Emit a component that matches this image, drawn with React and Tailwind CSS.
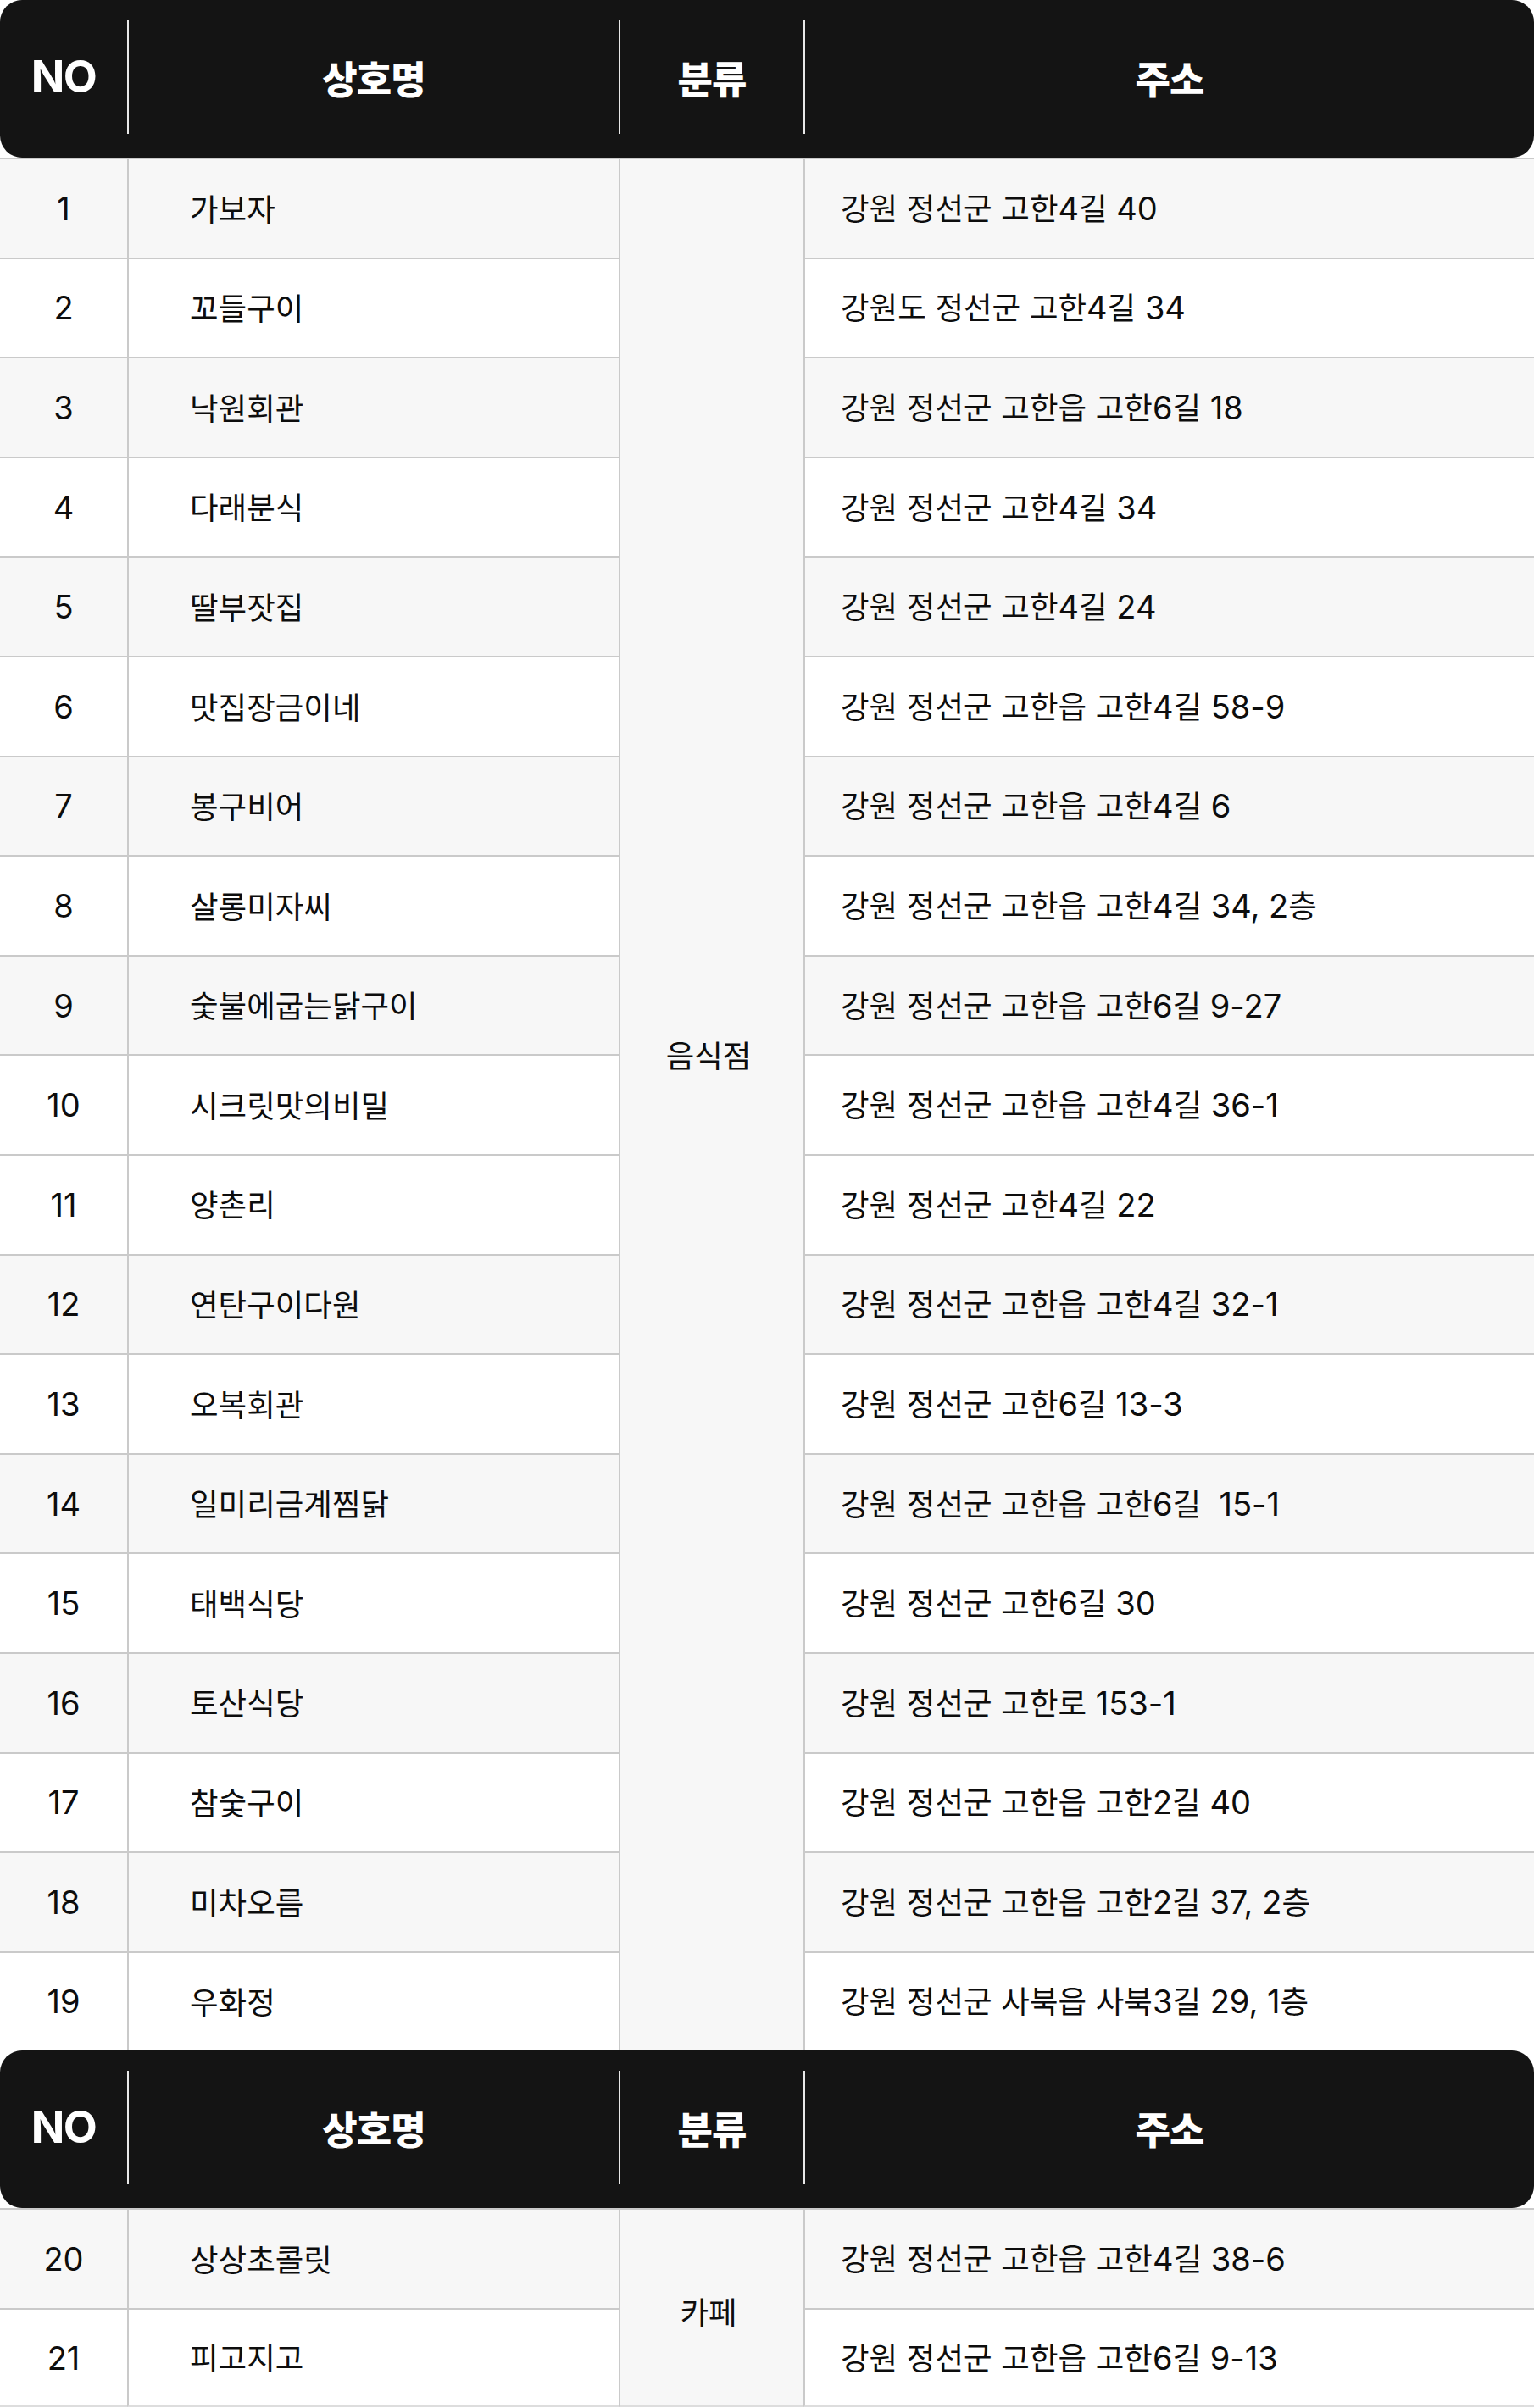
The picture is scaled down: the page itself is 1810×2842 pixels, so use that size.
import React from "react";

const rows1 = [
  [1, "가보자", "강원 정선군 고한4길 40"],
  [2, "꼬들구이", "강원도 정선군 고한4길 34"],
  [3, "낙원회관", "강원 정선군 고한읍 고한6길 18"],
  [4, "다래분식", "강원 정선군 고한4길 34"],
  [5, "딸부잣집", "강원 정선군 고한4길 24"],
  [6, "맛집장금이네", "강원 정선군 고한읍 고한4길 58-9"],
  [7, "봉구비어", "강원 정선군 고한읍 고한4길 6"],
  [8, "살롱미자씨", "강원 정선군 고한읍 고한4길 34, 2층"],
  [9, "숯불에굽는닭구이", "강원 정선군 고한읍 고한6길 9-27"],
  [10, "시크릿맛의비밀", "강원 정선군 고한읍 고한4길 36-1"],
  [11, "양촌리", "강원 정선군 고한4길 22"],
  [12, "연탄구이다원", "강원 정선군 고한읍 고한4길 32-1"],
  [13, "오복회관", "강원 정선군 고한6길 13-3"],
  [14, "일미리금계찜닭", "강원 정선군 고한읍 고한6길  15-1"],
  [15, "태백식당", "강원 정선군 고한6길 30"],
  [16, "토산식당", "강원 정선군 고한로 153-1"],
  [17, "참숯구이", "강원 정선군 고한읍 고한2길 40"],
  [18, "미차오름", "강원 정선군 고한읍 고한2길 37, 2층"],
  [19, "우화정", "강원 정선군 사북읍 사북3길 29, 1층"],
];

const rows2 = [
  [20, "상상초콜릿", "강원 정선군 고한읍 고한4길 38-6"],
  [21, "피고지고", "강원 정선군 고한읍 고한6길 9-13"],
];

const grayRows = new Set([1, 3, 5, 7, 9, 12, 14, 16, 18, 20]);

function Txt({ text }) {
  const parts = String(text).split(/([\u3131-\u318E\uAC00-\uD7A3]+)/);
  return (
    <span className="whitespace-pre leading-none text-[#0d0d0d]">
      {parts.map((p, i) =>
        p === "" ? null : /[\u3131-\u318E\uAC00-\uD7A3]/.test(p) ? (
          <span key={i} className="font-['Noto_Sans_CJK_KR',sans-serif] text-[36.5px]">
            {p}
          </span>
        ) : (
          <span key={i} className="font-[Inter,'Noto_Sans_CJK_KR',sans-serif] text-[38px]">
            {p}
          </span>
        )
      )}
    </span>
  );
}

function HeadTxt({ text }) {
  const isHangul = /[\uAC00-\uD7A3]/.test(text);
  return isHangul ? (
    <span className="font-['Noto_Sans_CJK_KR',sans-serif] font-black text-[45px] leading-none tracking-[-0.02em] text-white">
      {text}
    </span>
  ) : (
    <span className="font-[Inter,sans-serif] font-bold text-[52px] leading-none tracking-[-0.03em] text-white">
      {text}
    </span>
  );
}

function Header() {
  return (
    <div className="grid grid-cols-[150px_580px_218px_1fr] bg-[#141414] rounded-[26px] pt-[24px] pb-[28px] h-[186px]">
      <div className="flex items-center justify-center">
        <HeadTxt text="NO" />
      </div>
      <div className="flex items-center justify-center border-l-2 border-[#e8e8e8]">
        <HeadTxt text="상호명" />
      </div>
      <div className="flex items-center justify-center border-l-2 border-[#e8e8e8]">
        <HeadTxt text="분류" />
      </div>
      <div className="flex items-center justify-center border-l-2 border-[#e8e8e8]">
        <HeadTxt text="주소" />
      </div>
    </div>
  );
}

function Body({ rows, category, rowsClass, catClass, last }) {
  return (
    <div className={`grid grid-cols-[150px_580px_218px_1fr] ${rowsClass}`}>
      {rows.map(([no, name, addr], i) => {
        const bg = grayRows.has(no) ? "bg-[#f7f7f7]" : "bg-white";
        const isLast = last && i === rows.length - 1;
        const bb = isLast ? "border-b-2 border-b-[#dddddd]" : "";
        return (
          <React.Fragment key={no}>
            <div
              className={`${bg} ${bb} border-t-2 border-t-[#cacaca] flex items-center justify-center`}
              style={{ gridColumn: 1, gridRow: i + 1 }}
            >
              <Txt text={String(no)} />
            </div>
            <div
              className={`${bg} ${bb} border-t-2 border-t-[#cacaca] border-l-2 border-l-[#cacaca] flex items-center pl-[72px]`}
              style={{ gridColumn: 2, gridRow: i + 1 }}
            >
              <Txt text={name} />
            </div>
            <div
              className={`${bg} ${bb} border-t-2 border-t-[#cacaca] border-l-2 border-l-[#cacaca] flex items-center pl-[42px]`}
              style={{ gridColumn: 4, gridRow: i + 1 }}
            >
              <Txt text={addr} />
            </div>
          </React.Fragment>
        );
      })}
      <div
        className={`bg-[#f7f7f7] border-t-2 border-t-[#cacaca] border-l-2 border-l-[#cacaca] flex items-center justify-center pr-2 ${catClass} ${
          last ? "border-b-2 border-b-[#dddddd]" : ""
        }`}
        style={{ gridColumn: 3, gridRow: `1 / span ${rows.length}` }}
      >
        <Txt text={category} />
      </div>
    </div>
  );
}

export default function App() {
  return (
    <div className="w-[1810px] bg-white">
      <Header />
      <Body
        rows={rows1}
        category="음식점"
        rowsClass="grid-rows-[repeat(19,117.6px)]"
        catClass="pb-[117px]"
        last={false}
      />
      <Header />
      <Body
        rows={rows2}
        category="카페"
        rowsClass="grid-rows-[repeat(2,117.6px)]"
        catClass="pt-[8px]"
        last={true}
      />
    </div>
  );
}
